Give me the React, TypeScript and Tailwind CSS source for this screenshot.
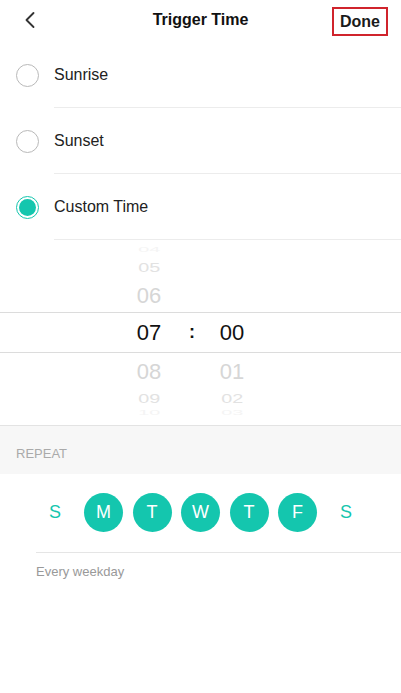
import { ChevronLeft } from 'lucide-react';

const options = [
  { label: 'Sunrise', selected: false },
  { label: 'Sunset', selected: false },
  { label: 'Custom Time', selected: true },
];

const days = [
  { d: 'S', on: false },
  { d: 'M', on: true },
  { d: 'T', on: true },
  { d: 'W', on: true },
  { d: 'T', on: true },
  { d: 'F', on: true },
  { d: 'S', on: false },
];

function Radio({ selected }: { selected: boolean }) {
  if (selected) {
    return (
      <div className="w-[23px] h-[23px] rounded-full border-[1.5px] border-[#14c6ae] p-[2px] shrink-0">
        <div className="w-full h-full rounded-full bg-[#14c6ae]" />
      </div>
    );
  }
  return <div className="w-[23px] h-[23px] rounded-full border-[1.5px] border-[#b9b9b9] shrink-0" />;
}

export default function App() {
  return (
    <div className="w-[401px] h-[693px] bg-white font-['Liberation_Sans',Arial,sans-serif] text-[#222] overflow-hidden">
      {/* header */}
      <header className="relative h-[42px] flex items-center justify-center">
        <ChevronLeft className="absolute left-[16px] top-[6px] w-[28px] h-[28px] text-[#333]" strokeWidth={1.6} />
        <h1 className="text-[16px] font-bold text-[#111] -mt-[2px]">Trigger Time</h1>
        <div className="absolute left-[332px] top-[7px] w-[56px] h-[29px] border-2 border-[#d0242c] flex items-center justify-center">
          <span className="text-[16px] font-bold text-[#1a1a1a]">Done</span>
        </div>
      </header>

      {/* options */}
      <div>
        {options.map((o) => (
          <div key={o.label} className="flex items-center h-[66px] pl-[16px]">
            <Radio selected={o.selected} />
            <div className="ml-[15px] flex-1 h-full flex items-center border-b border-[#ececec]">
              <span className="text-[16px] text-[#222]">{o.label}</span>
            </div>
          </div>
        ))}
      </div>

      {/* time picker */}
      <div className="border-b border-[#e3e3e3] text-[22px]">
        <div className="h-[72px] flex">
          <div className="ml-[119px] w-[60px] flex flex-col items-center pt-[4px]">
            <div className="h-[12px] flex items-center text-[#f4f4f4] scale-y-[0.3] scale-x-90">04</div>
            <div className="h-[22px] flex items-center text-[#e2e2e2] scale-y-[0.6] scale-x-90">05</div>
            <div className="h-[34px] flex items-center text-[#d6d6d6]">06</div>
          </div>
        </div>
        <div className="h-[41px] border-y border-[#dcdcdc] flex items-center text-[#111]">
          <div className="ml-[119px] w-[60px] text-center">07</div>
          <div className="w-[26px] text-center text-[18px] font-bold">:</div>
          <div className="w-[54px] text-center">00</div>
        </div>
        <div className="h-[72px] flex">
          <div className="ml-[119px] w-[60px] flex flex-col items-center">
            <div className="h-[36px] flex items-center text-[#d6d6d6]">08</div>
            <div className="h-[18px] flex items-center text-[#e2e2e2] scale-y-[0.6] scale-x-90">09</div>
            <div className="h-[12px] flex items-center text-[#f4f4f4] scale-y-[0.3] scale-x-90">10</div>
          </div>
          <div className="ml-[26px] w-[54px] flex flex-col items-center">
            <div className="h-[36px] flex items-center text-[#d6d6d6]">01</div>
            <div className="h-[18px] flex items-center text-[#e2e2e2] scale-y-[0.6] scale-x-90">02</div>
            <div className="h-[12px] flex items-center text-[#f4f4f4] scale-y-[0.3] scale-x-90">03</div>
          </div>
        </div>
      </div>

      {/* repeat */}
      <div className="h-[48px] bg-[#f7f7f7] pl-[16px] pt-[20px]">
        <p className="text-[13px] leading-[16px] text-[#aaaaaa]">REPEAT</p>
      </div>
      <div className="pt-[19px] pb-[20px] flex justify-center">
        {days.map((d, i) => (
          <div key={i} className="w-[48.5px] flex justify-center">
            <div
              className={
                d.on
                  ? 'w-[39px] h-[39px] rounded-full bg-[#14c6ae] text-white flex items-center justify-center text-[18px]'
                  : 'w-[39px] h-[39px] flex items-center justify-center text-[#14c6ae] text-[18px]'
              }
            >
              {d.d}
            </div>
          </div>
        ))}
      </div>
      <div className="ml-[36px] border-t border-[#e5e5e5] pt-[11px]">
        <p className="text-[13px] leading-[16px] text-[#999]">Every weekday</p>
      </div>
    </div>
  );
}
